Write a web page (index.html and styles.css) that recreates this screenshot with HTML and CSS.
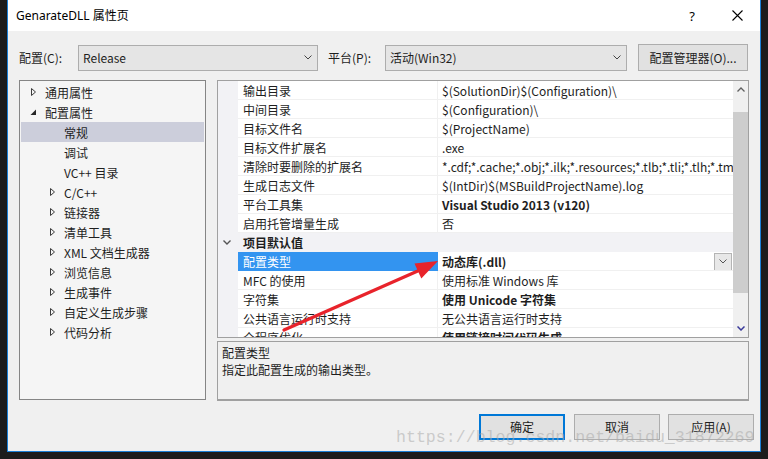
FILE: index.html
```html
<!DOCTYPE html>
<html lang="zh-CN">
<head>
<meta charset="utf-8">
<title>GenarateDLL 属性页</title>
<link rel="stylesheet" href="styles.css">
</head>
<body>
<div class="window">
  <div class="titlebar">
    <span class="title">GenarateDLL 属性页</span>
    <span class="tb-help">?</span>
    <svg class="tb-close" width="11" height="11" viewBox="0 0 11 11"><path d="M0.5 0.5 L10.5 10.5 M10.5 0.5 L0.5 10.5" stroke="#000" stroke-width="1.1" fill="none"/></svg>
  </div>
  <div class="content">
    <div class="toolbar">
      <span class="lbl lbl-config">配置(C):</span>
      <div class="combo combo-config"><span class="combo-text">Release</span><svg class="chev" width="8" height="5" viewBox="0 0 8 5"><polyline points="0.5,0.5 4,4 7.5,0.5" fill="none" stroke="#444" stroke-width="1"/></svg></div>
      <span class="lbl lbl-platform">平台(P):</span>
      <div class="combo combo-platform"><span class="combo-text">活动(Win32)</span><svg class="chev" width="8" height="5" viewBox="0 0 8 5"><polyline points="0.5,0.5 4,4 7.5,0.5" fill="none" stroke="#444" stroke-width="1"/></svg></div>
      <div class="btn btn-mgr">配置管理器(O)...</div>
    </div>

    <div class="main">
      <div class="tree">
        <div class="node l0"><svg class="tw" width="8" height="20" viewBox="0 0 8 20"><polygon points="1.5,6.5 5.5,10 1.5,13.5" fill="none" stroke="#3c3c3c" stroke-width="1"/></svg><span>通用属性</span></div>
        <div class="node l0"><svg class="tw" width="8" height="20" viewBox="0 0 8 20"><polygon points="6,7.5 6,13 0.5,13" fill="#262626"/></svg><span>配置属性</span></div>
        <div class="node l1 sel"><span class="tw-none"></span><span>常规</span></div>
        <div class="node l1"><span class="tw-none"></span><span>调试</span></div>
        <div class="node l1"><span class="tw-none"></span><span>VC++ 目录</span></div>
        <div class="node l1"><svg class="tw" width="8" height="20" viewBox="0 0 8 20"><polygon points="1.5,6.5 5.5,10 1.5,13.5" fill="none" stroke="#3c3c3c" stroke-width="1"/></svg><span>C/C++</span></div>
        <div class="node l1"><svg class="tw" width="8" height="20" viewBox="0 0 8 20"><polygon points="1.5,6.5 5.5,10 1.5,13.5" fill="none" stroke="#3c3c3c" stroke-width="1"/></svg><span>链接器</span></div>
        <div class="node l1"><svg class="tw" width="8" height="20" viewBox="0 0 8 20"><polygon points="1.5,6.5 5.5,10 1.5,13.5" fill="none" stroke="#3c3c3c" stroke-width="1"/></svg><span>清单工具</span></div>
        <div class="node l1"><svg class="tw" width="8" height="20" viewBox="0 0 8 20"><polygon points="1.5,6.5 5.5,10 1.5,13.5" fill="none" stroke="#3c3c3c" stroke-width="1"/></svg><span>XML 文档生成器</span></div>
        <div class="node l1"><svg class="tw" width="8" height="20" viewBox="0 0 8 20"><polygon points="1.5,6.5 5.5,10 1.5,13.5" fill="none" stroke="#3c3c3c" stroke-width="1"/></svg><span>浏览信息</span></div>
        <div class="node l1"><svg class="tw" width="8" height="20" viewBox="0 0 8 20"><polygon points="1.5,6.5 5.5,10 1.5,13.5" fill="none" stroke="#3c3c3c" stroke-width="1"/></svg><span>生成事件</span></div>
        <div class="node l1"><svg class="tw" width="8" height="20" viewBox="0 0 8 20"><polygon points="1.5,6.5 5.5,10 1.5,13.5" fill="none" stroke="#3c3c3c" stroke-width="1"/></svg><span>自定义生成步骤</span></div>
        <div class="node l1"><svg class="tw" width="8" height="20" viewBox="0 0 8 20"><polygon points="1.5,6.5 5.5,10 1.5,13.5" fill="none" stroke="#3c3c3c" stroke-width="1"/></svg><span>代码分析</span></div>
      </div>

      <div class="right">
        <div class="grid">
          <div class="rows">
            <div class="prow"><div class="m"></div><div class="n">输出目录</div><div class="v">$(SolutionDir)$(Configuration)\</div></div>
            <div class="prow"><div class="m"></div><div class="n">中间目录</div><div class="v">$(Configuration)\</div></div>
            <div class="prow"><div class="m"></div><div class="n">目标文件名</div><div class="v">$(ProjectName)</div></div>
            <div class="prow"><div class="m"></div><div class="n">目标文件扩展名</div><div class="v">.exe</div></div>
            <div class="prow"><div class="m"></div><div class="n">清除时要删除的扩展名</div><div class="v">*.cdf;*.cache;*.obj;*.ilk;*.resources;*.tlb;*.tli;*.tlh;*.tmp;*.rsp;*.pgc;*.pgd;*.meta</div></div>
            <div class="prow"><div class="m"></div><div class="n">生成日志文件</div><div class="v">$(IntDir)$(MSBuildProjectName).log</div></div>
            <div class="prow"><div class="m"></div><div class="n">平台工具集</div><div class="v b">Visual Studio 2013 (v120)</div></div>
            <div class="prow"><div class="m"></div><div class="n">启用托管增量生成</div><div class="v">否</div></div>
            <div class="prow cat"><div class="m"><svg width="20" height="19" viewBox="0 0 20 19"><polyline points="5.5,7.5 9,11 12.5,7.5" fill="none" stroke="#555" stroke-width="1.4"/></svg></div><div class="c">项目默认值</div></div>
            <div class="prow"><div class="m"></div><div class="n selname">配置类型</div><div class="v b vdrop"><span class="vt">动态库(.dll)</span><span class="dd"><svg width="8" height="5" viewBox="0 0 8 5"><polyline points="0.5,0.5 4,4 7.5,0.5" fill="none" stroke="#555" stroke-width="1"/></svg></span></div></div>
            <div class="prow"><div class="m"></div><div class="n">MFC 的使用</div><div class="v">使用标准 Windows 库</div></div>
            <div class="prow"><div class="m"></div><div class="n">字符集</div><div class="v b">使用 Unicode 字符集</div></div>
            <div class="prow"><div class="m"></div><div class="n">公共语言运行时支持</div><div class="v">无公共语言运行时支持</div></div>
            <div class="prow"><div class="m"></div><div class="n">全程序优化</div><div class="v b">使用链接时间代码生成</div></div>
          </div>
          <div class="scrollbar">
            <div class="sb-btn"><svg width="8" height="5" viewBox="0 0 8 5"><polyline points="0.5,4.5 4,1 7.5,4.5" fill="none" stroke="#606060" stroke-width="1.3"/></svg></div>
            <div class="sb-gap"></div>
            <div class="sb-thumb"></div>
            <div class="sb-fill"></div>
            <div class="sb-btn sb-down"><svg width="8" height="5" viewBox="0 0 8 5"><polyline points="0.5,0.5 4,4 7.5,0.5" fill="none" stroke="#3a3a9a" stroke-width="1.5"/></svg></div>
          </div>
        </div>
        <div class="desc">
          <div class="desc-title">配置类型</div>
          <div class="desc-text">指定此配置生成的输出类型。</div>
        </div>
      </div>
    </div>

    <div class="buttons">
      <div class="btn btn-ok">确定</div>
      <div class="btn btn-cancel">取消</div>
      <div class="btn btn-apply">应用(A)</div>
    </div>
  </div>
</div>

<div class="watermark">https://blog.csdn.net/baidu_31872269</div>

<svg class="annot" width="768" height="459" viewBox="0 0 768 459">
  <line x1="284" y1="330" x2="420" y2="270" stroke="#e8232b" stroke-width="3.2" stroke-linecap="round"/>
  <polygon points="438,261 414.5,263.4 421.3,278.6" fill="#e8232b"/>
</svg>
</body>
</html>
```

FILE: styles.css
```css
* { box-sizing: border-box; }

html, body {
  margin: 0;
  padding: 0;
}

body {
  width: 768px;
  height: 459px;
  overflow: hidden;
  background: #1c1c1c;
  padding-left: 7px;
  font-family: "Noto Sans CJK SC", "Noto Sans", sans-serif;
  font-size: 12px;
  color: #1e1e1e;
  position: relative;
}

.window {
  width: 754px;
  height: 452px;
  border-left: 1px solid #1a7fd6;
  border-right: 1px solid #1a7fd6;
  border-bottom: 1px solid #1a7fd6;
  background: #f0f0f0;
  display: flex;
  flex-direction: column;
}

.titlebar {
  height: 31px;
  background: #ffffff;
  display: flex;
  align-items: center;
  padding-left: 8px;
}

.title {
  flex: 1;
  font-family: "Noto Sans", "Noto Sans CJK SC", sans-serif;
  font-size: 12px;
  line-height: 20px;
  color: #000;
  padding-top: 1px;
}

.tb-help {
  width: 12px;
  text-align: center;
  font-family: "Noto Sans", sans-serif;
  font-size: 13px;
  line-height: 20px;
  color: #000;
  margin-right: 34px;
}

.tb-close {
  margin-right: 17px;
  display: block;
}

.content {
  flex: 1;
  padding: 13px 6px 0 11px;
  display: flex;
  flex-direction: column;
}

.toolbar {
  display: flex;
  align-items: center;
  height: 27px;
}

.lbl {
  line-height: 26px;
  color: #1e1e1e;
}

.lbl-config { width: 59px; }
.lbl-platform { width: 57px; margin-left: 10px; }

.combo {
  height: 26px;
  border: 1px solid #adadad;
  background: #e5e5e5;
  display: flex;
  align-items: center;
  padding-left: 4px;
  padding-right: 5px;
}

.combo-config { width: 240px; }
.combo-platform { width: 242px; }

.combo-text {
  flex: 1;
  line-height: 24px;
}

.chev { display: block; }

.btn {
  height: 26px;
  border: 1px solid #adadad;
  background: #e1e1e1;
  display: flex;
  align-items: center;
  justify-content: center;
  line-height: 24px;
}

.btn-mgr {
  width: 110px;
  height: 27px;
  margin-left: 11px;
}

.main {
  display: flex;
  margin-top: 9px;
}

.tree {
  width: 187px;
  height: 320px;
  border: 1px solid #858585;
  background: #f5f5f5;
  padding-top: 1px;
}

.node {
  height: 20px;
  display: flex;
  align-items: center;
}

.node.l0 { padding-left: 10px; }
.node.l1 { padding-left: 29px; }

.node.sel {
  margin: 0 1px;
  padding-left: 28px;
  background: #cccedb;
}

.tw {
  display: block;
  flex: none;
}

.tw-none {
  width: 8px;
  flex: none;
}

.node span:last-child {
  margin-left: 7px;
  white-space: nowrap;
  line-height: 20px;
  padding-top: 2px;
}

.right {
  width: 532px;
  margin-left: 11px;
  display: flex;
  flex-direction: column;
}

.grid {
  height: 258px;
  border: 1px solid #a0a0a0;
  background: #ffffff;
  display: flex;
  overflow: hidden;
}

.rows {
  flex: 1;
  overflow: hidden;
}

.prow {
  display: flex;
  height: 19px;
  line-height: 18px;
}

.prow .m {
  width: 20px;
  flex: none;
  background: #f2f2f5;
}

.prow .n {
  width: 200px;
  flex: none;
  padding-left: 5px;
  padding-top: 1px;
  border-right: 1px solid #f0f0f0;
  border-bottom: 1px solid #f0f0f0;
  white-space: nowrap;
  overflow: hidden;
}

.prow .v {
  flex: 1;
  min-width: 0;
  padding-left: 4px;
  padding-top: 1px;
  border-bottom: 1px solid #f0f0f0;
  white-space: nowrap;
  overflow: hidden;
}

.prow .b { font-weight: 700; }

.prow .selname {
  background: #3394f0;
  color: #ffffff;
  border-right-color: #3394f0;
  border-bottom-color: #3394f0;
}

.prow .vdrop {
  display: flex;
  align-items: center;
  padding-right: 1px;
  padding-top: 0;
}

.vdrop .vt { flex: 1; padding-top: 1px; }

.dd {
  width: 18px;
  height: 18px;
  border: 1px solid #b4b4b4;
  background: #e8e8e8;
  display: flex;
  align-items: center;
  justify-content: center;
  margin-top: 1px;
}

.dd svg { display: block; }

.prow.cat .m svg { display: block; }

.prow.cat .c {
  flex: 1;
  background: #f2f2f5;
  padding-left: 5px;
  padding-top: 1px;
  font-weight: 700;
}

.scrollbar {
  width: 15px;
  flex: none;
  background: #f0f0f0;
  display: flex;
  flex-direction: column;
}

.sb-btn {
  height: 17px;
  display: flex;
  align-items: center;
  justify-content: center;
  flex: none;
}

.sb-btn svg { display: block; }

.sb-gap { height: 14px; flex: none; }

.sb-thumb {
  height: 181px;
  flex: none;
  background: #cdcdcd;
}

.sb-fill { flex: 1; }

.desc {
  margin-top: 3px;
  height: 60px;
  border: 1px solid #a0a0a0;
  border-bottom-width: 2px;
  background: #f0f0f0;
  padding: 2px 4px 0 4px;
  line-height: 17px;
}

.buttons {
  display: flex;
  justify-content: flex-end;
  margin-top: 13px;
}

.buttons .btn {
  width: 86px;
  height: 26px;
}

.btn-ok {
  border: 2px solid #0078d7 !important;
}

.btn-cancel { margin-left: 9px; }
.btn-apply { margin-left: 8px; }

.watermark {
  position: absolute;
  left: 396px;
  top: 428px;
  font-family: "Liberation Mono", monospace;
  font-size: 16.6px;
  line-height: 20px;
  color: rgba(170, 170, 170, 0.55);
  white-space: nowrap;
  pointer-events: none;
}

.annot {
  position: absolute;
  left: 0;
  top: 0;
  pointer-events: none;
}
```
